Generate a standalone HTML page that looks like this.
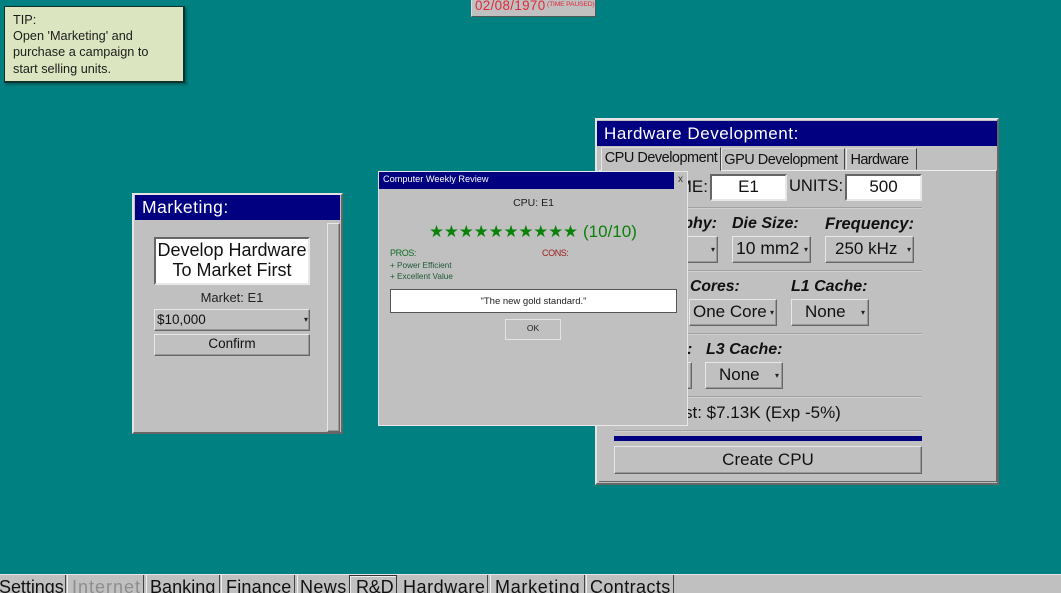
<!DOCTYPE html>
<html><head><meta charset="utf-8">
<style>
html,body{margin:0;padding:0;width:1061px;height:593px;overflow:hidden;background:#008080;}
body{position:relative;font-family:"Liberation Sans",sans-serif;color:#111;}
div{position:absolute;box-sizing:border-box;}
.t{white-space:nowrap;line-height:1;}
.c{text-align:center;}
.win{background:#c0c0c0;border:2px solid;border-color:#e4e4e4 #666 #666 #e4e4e4;}
.bar{background:#000080;color:#fff;}
.btn{background:#c0c0c0;border:1px solid;border-color:#e8e8e8 #666 #666 #e8e8e8;box-shadow:inset -1px -1px 0 #999;}
.in{background:#fff;border:2px solid;border-color:#666 #e8e8e8 #e8e8e8 #666;}
.hr{background:#a2a2a2;height:1px;box-shadow:0 1px 0 #d0d0d0;}
.ar{font-size:8px;line-height:1;color:#222;}
.b{font-weight:bold;font-style:italic;}
.tab{top:0;height:19px;background:#c0c0c0;border:1px solid;border-color:#d8d8d8 #444 transparent #e8e8e8;font-size:16px;line-height:19px;text-align:center;white-space:nowrap;overflow:hidden;}
</style></head><body>

<!-- tip -->
<div style="left:4px;top:6px;width:181px;height:77px;background:#dbe6c1;border:1px solid #10302e;border-right:2px solid #10302e;border-bottom:2px solid #10302e;box-shadow:2px 2px 2px #055f5f"></div>
<div class="t" style="left:13px;top:12px;font-size:12.7px;line-height:16.2px;color:#1c1c1c">TIP:<br>Open 'Marketing' and<br>purchase a campaign to<br>start selling units.</div>

<!-- date -->
<div style="left:471px;top:-2px;width:125px;height:19px;background:#c0c0c0;border:1px solid;border-color:#ddd #555 #555 #ddd"></div>
<div class="t" style="left:475px;top:-1px;font-size:13.4px;color:#e0283a;letter-spacing:.35px">02/08/1970</div>
<div class="t" style="left:547px;top:2px;font-size:6.8px;color:#e0283a;letter-spacing:-.2px">(TIME PAUSED)</div>

<!-- marketing -->
<div class="win" style="left:132px;top:193px;width:211px;height:241px"></div>
<div class="bar" style="left:135px;top:195px;width:205px;height:25px"></div>
<div class="t" style="left:142px;top:199px;font-size:17.5px;color:#fff;letter-spacing:.5px">Marketing:</div>
<div class="btn" style="left:327px;top:223px;width:13px;height:209px"></div>
<div class="in" style="left:154px;top:237px;width:156px;height:48px"></div>
<div class="t c" style="left:154px;top:240px;width:156px;font-size:18px;line-height:20px">Develop Hardware<br>To Market First</div>
<div class="t c" style="left:154px;top:291px;width:156px;font-size:13px;color:#222">Market: E1</div>
<div class="btn" style="left:154px;top:309px;width:156px;height:22px"></div>
<div class="t" style="left:157px;top:313px;font-size:13.5px">$10,000</div>
<div class="t ar" style="left:304px;top:316px">▾</div>
<div class="btn" style="left:154px;top:334px;width:156px;height:22px"></div>
<div class="t c" style="left:154px;top:337px;width:156px;font-size:13.5px">Confirm</div>

<!-- hardware -->
<div class="win" style="left:595px;top:118px;width:404px;height:367px"></div>
<div class="bar" style="left:597px;top:121px;width:400px;height:25px"></div>
<div class="t" style="left:604px;top:125px;font-size:17px;color:#fff;letter-spacing:.55px">Hardware Development:</div>
<div style="left:599px;top:170px;width:398px;height:312px;border:1px solid;border-color:#eee #666 #666 #eee;border-left:0"></div>
<div class="tab" style="left:601px;top:147px;width:120px;height:24px;line-height:21px;font-size:14.5px;letter-spacing:-.5px">CPU Development</div>
<div class="tab" style="left:721px;top:148px;width:124px;height:22px;line-height:22px;font-size:14.5px;letter-spacing:-.5px;text-indent:-4px">GPU Development</div>
<div class="tab" style="left:846px;top:148px;width:71px;height:22px;line-height:22px;font-size:14.5px;letter-spacing:-.6px;text-indent:-4px">Hardware</div>

<div class="t" style="right:353px;top:178px;font-size:17px">NAME:</div>
<div class="in" style="left:710px;top:174px;width:77px;height:27px"></div>
<div class="t c" style="left:710px;top:178px;width:77px;font-size:17px">E1</div>
<div class="t" style="left:789px;top:178px;font-size:16.5px">UNITS:</div>
<div class="in" style="left:845px;top:174px;width:77px;height:27px"></div>
<div class="t c" style="left:845px;top:178px;width:77px;font-size:17px">500</div>
<div class="hr" style="left:614px;top:207px;width:308px"></div>

<div class="t b" style="right:344px;top:216px;font-size:16px">Lithography:</div>
<div class="t b" style="left:732px;top:216px;font-size:16px">Die Size:</div>
<div class="t b" style="left:825px;top:216px;font-size:16.5px">Frequency:</div>
<div class="btn" style="left:650px;top:236px;width:68px;height:27px"></div>
<div class="t ar" style="left:711px;top:246px">▾</div>
<div class="btn" style="left:732px;top:236px;width:79px;height:27px"></div>
<div class="t" style="left:736px;top:240px;font-size:17.5px">10 mm2</div>
<div class="t ar" style="left:804px;top:246px">▾</div>
<div class="btn" style="left:825px;top:236px;width:89px;height:27px"></div>
<div class="t" style="left:835px;top:240px;font-size:17px">250 kHz</div>
<div class="t ar" style="left:907px;top:246px">▾</div>
<div class="hr" style="left:614px;top:270px;width:308px"></div>

<div class="t b" style="left:690px;top:279px;font-size:15.7px">Cores:</div>
<div class="t b" style="left:791px;top:279px;font-size:16px">L1 Cache:</div>
<div class="btn" style="left:689px;top:299px;width:88px;height:27px"></div>
<div class="t" style="left:693px;top:303px;font-size:17px">One Core</div>
<div class="t ar" style="left:770px;top:309px">▾</div>
<div class="btn" style="left:791px;top:299px;width:78px;height:27px"></div>
<div class="t" style="left:805px;top:303px;font-size:17px">None</div>
<div class="t ar" style="left:861px;top:309px">▾</div>
<div class="hr" style="left:614px;top:333px;width:308px"></div>

<div class="t b" style="left:687px;top:342px;font-size:16px">:</div>
<div class="t b" style="left:706px;top:342px;font-size:16px">L3 Cache:</div>
<div class="btn" style="left:650px;top:362px;width:42px;height:27px"></div>
<div class="btn" style="left:705px;top:362px;width:78px;height:27px"></div>
<div class="t" style="left:719px;top:366px;font-size:17px">None</div>
<div class="t ar" style="left:775px;top:372px">▾</div>
<div class="hr" style="left:614px;top:396px;width:308px"></div>

<div class="t" style="left:684px;top:404px;font-size:17px">st: $7.13K (Exp -5%)</div>
<div class="hr" style="left:614px;top:430px;width:308px"></div>
<div style="left:614px;top:436px;width:308px;height:5px;background:#000080"></div>
<div class="btn" style="left:614px;top:446px;width:308px;height:28px"></div>
<div class="t c" style="left:614px;top:451px;width:308px;font-size:17px">Create CPU</div>

<!-- review -->
<div style="left:378px;top:171px;width:310px;height:255px;background:#c0c0c0;border:1px solid #e8e8e8;border-left-color:#e0e0e0"></div>
<div class="bar" style="left:379px;top:172px;width:295px;height:17px"></div>
<div class="t" style="left:383px;top:175px;font-size:9.2px;color:#fff">Computer Weekly Review</div>
<div class="t" style="left:678px;top:175px;font-size:10px;color:#333">x</div>
<div class="t c" style="left:379px;top:198px;width:309px;font-size:10.5px;color:#1c1c1c">CPU: E1</div>
<div class="t" style="left:429px;top:223px;font-size:16.8px;letter-spacing:-.15px;color:#0a820a;font-family:'DejaVu Sans',sans-serif">★★★★★★★★★★</div>
<div class="t" style="left:583px;top:223px;font-size:17px;color:#0a820a">(10/10)</div>
<div class="t" style="left:390px;top:249px;font-size:9px;letter-spacing:-.4px;color:#0f6e2a">PROS:</div>
<div class="t" style="left:542px;top:249px;font-size:9px;letter-spacing:-.4px;color:#9c1b1b">CONS:</div>
<div class="t" style="left:390px;top:262px;font-size:8.2px;color:#1f5a35">+ Power Efficient</div>
<div class="t" style="left:390px;top:273px;font-size:8.2px;color:#1f5a35">+ Excellent Value</div>
<div style="left:390px;top:289px;width:287px;height:24px;background:#fff;border:1px solid #555"></div>
<div class="t c" style="left:390px;top:297px;width:287px;font-size:9.5px;color:#222">"The new gold standard."</div>
<div style="left:505px;top:319px;width:56px;height:21px;background:#c0c0c0;border:1px solid #e4e4e4"></div>
<div class="t c" style="left:505px;top:324px;width:56px;font-size:8.5px;color:#222">OK</div>

<!-- taskbar -->
<div style="left:0;top:574px;width:1061px;height:19px;background:#c0c0c0;border-top:1px solid #e4e4e4"></div>
<div style="left:65px;top:575px;width:1px;height:18px;background:#444"></div>
<div style="left:67px;top:575px;width:1px;height:18px;background:#eee"></div>
<div style="left:143px;top:575px;width:1px;height:18px;background:#444"></div>
<div style="left:146px;top:575px;width:1px;height:18px;background:#eee"></div>
<div style="left:219px;top:575px;width:1px;height:18px;background:#444"></div>
<div style="left:221px;top:575px;width:1px;height:18px;background:#eee"></div>
<div style="left:294px;top:575px;width:1px;height:18px;background:#444"></div>
<div style="left:297px;top:575px;width:1px;height:18px;background:#eee"></div>
<div style="left:349px;top:575px;width:48px;height:18px;border:1px solid #333;border-bottom:0;box-shadow:inset 1px 1px 0 #eee"></div>
<div style="left:487px;top:575px;width:1px;height:18px;background:#444"></div>
<div style="left:490px;top:575px;width:1px;height:18px;background:#eee"></div>
<div style="left:584px;top:575px;width:1px;height:18px;background:#444"></div>
<div style="left:586px;top:575px;width:1px;height:18px;background:#eee"></div>
<div style="left:673px;top:575px;width:1px;height:18px;background:#444"></div>
<div class="t" style="left:-1px;top:578px;font-size:18px;letter-spacing:-.05px">Settings</div>
<div class="t" style="left:72px;top:578px;font-size:18px;color:#8e8e8e;letter-spacing:1px">Internet</div>
<div class="t" style="left:150px;top:578px;font-size:18px;letter-spacing:.05px">Banking</div>
<div class="t" style="left:226px;top:578px;font-size:18px;letter-spacing:.2px">Finance</div>
<div class="t" style="left:300px;top:578px;font-size:18px;letter-spacing:.4px">News</div>
<div class="t" style="left:356px;top:578px;font-size:18px;letter-spacing:-.2px">R&amp;D</div>
<div class="t" style="left:403px;top:578px;font-size:18px;letter-spacing:.55px">Hardware</div>
<div class="t" style="left:495px;top:578px;font-size:18px;letter-spacing:.7px">Marketing</div>
<div class="t" style="left:590px;top:578px;font-size:18px;letter-spacing:.4px">Contracts</div>

</body></html>
